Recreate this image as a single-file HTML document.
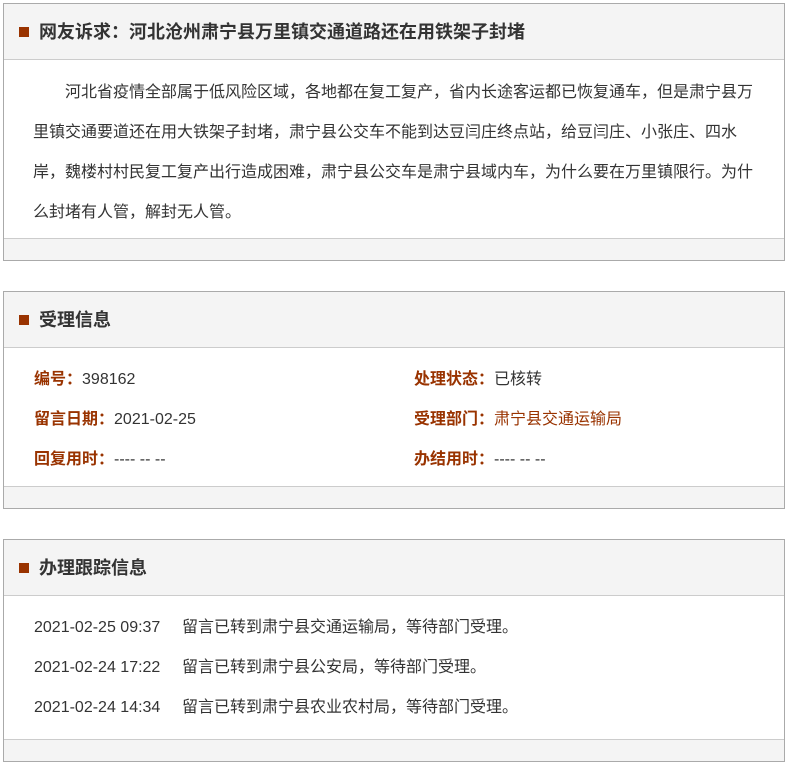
<!DOCTYPE html>
<html><head><meta charset="utf-8"><style>
*{margin:0;padding:0;box-sizing:border-box}
body{width:788px;height:764px;background:#fff;font-family:"Liberation Sans","Microsoft YaHei","Noto Sans CJK SC",sans-serif;color:#333;position:relative;overflow:hidden}
.p{position:absolute;left:3px;width:782px;border:1px solid #aaa;background:#fff}
.h{height:56px;background:#f4f4f4;border-bottom:1px solid #ccc;position:relative}
.h i{position:absolute;left:15px;top:23px;width:10px;height:10px;background:#993300}
.h b{position:absolute;left:35px;top:0;line-height:56px;font-size:18px;color:#333}
.f{height:22px;background:#f4f4f4;border-top:1px solid #ccc}
.t{font-size:16px;line-height:40px;white-space:nowrap}
.lb{color:#993300;font-weight:bold}
.row{position:relative;height:40px;font-size:16px;line-height:40px}
.row span.a{position:absolute;left:30px}
.row span.b{position:absolute;left:410px}
</style></head><body>
<div class="p" style="top:3px">
<div class="h"><i></i><b>网友诉求：河北沧州肃宁县万里镇交通道路还在用铁架子封堵</b></div>
<div class="t" style="padding:13px 0 5px 29px">
<div style="padding-left:32px">河北省疫情全部属于低风险区域，各地都在复工复产，省内长途客运都已恢复通车，但是肃宁县万</div>
<div>里镇交通要道还在用大铁架子封堵，肃宁县公交车不能到达豆闫庄终点站，给豆闫庄、小张庄、四水</div>
<div>岸，魏楼村村民复工复产出行造成困难，肃宁县公交车是肃宁县域内车，为什么要在万里镇限行。为什</div>
<div>么封堵有人管，解封无人管。</div>
</div>
<div class="f"></div>
</div>
<div class="p" style="top:291px">
<div class="h"><i></i><b>受理信息</b></div>
<div style="padding:12px 0 6px">
<div class="row"><span class="a"><span class="lb">编号：</span>398162</span><span class="b"><span class="lb">处理状态：</span>已核转</span></div>
<div class="row"><span class="a"><span class="lb">留言日期：</span>2021-02-25</span><span class="b"><span class="lb">受理部门：</span><span style="color:#993300">肃宁县交通运输局</span></span></div>
<div class="row"><span class="a"><span class="lb">回复用时：</span>---- -- --</span><span class="b"><span class="lb">办结用时：</span>---- -- --</span></div>
</div>
<div class="f"></div>
</div>
<div class="p" style="top:539px">
<div class="h"><i></i><b>办理跟踪信息</b></div>
<div style="padding:12px 0 11px">
<div class="row"><span class="a">2021-02-25 09:37</span><span class="a" style="left:178px">留言已转到肃宁县交通运输局，等待部门受理。</span></div>
<div class="row"><span class="a">2021-02-24 17:22</span><span class="a" style="left:178px">留言已转到肃宁县公安局，等待部门受理。</span></div>
<div class="row"><span class="a">2021-02-24 14:34</span><span class="a" style="left:178px">留言已转到肃宁县农业农村局，等待部门受理。</span></div>
</div>
<div class="f"></div>
</div>
</body></html>
